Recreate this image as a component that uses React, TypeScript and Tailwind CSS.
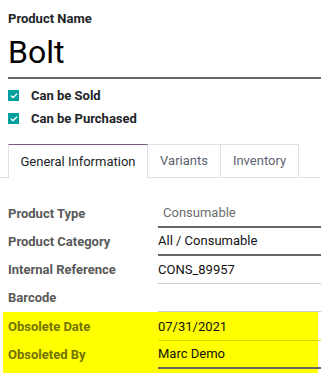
import { Check } from 'lucide-react';

function Checkbox({ label }: { label: string }) {
  return (
    <div className="flex h-[23px] items-center">
      <span className="ml-2 flex h-[11px] w-[11px] items-center justify-center bg-[#00a09d]">
        <Check className="h-[8px] w-[8px] text-white" strokeWidth={4} />
      </span>
      <span className="ml-[12px] text-[13px] font-bold text-[#212529]">{label}</span>
    </div>
  );
}

function Field({
  label,
  value,
  line,
  muted,
  hl,
}: {
  label: string;
  value?: string;
  line: 'dark' | 'light';
  muted?: boolean;
  hl?: boolean;
}) {
  return (
    <div className="flex h-[28px]">
      <div
        className={`flex items-center text-[13px] font-bold ${hl ? 'w-[155px] pl-[5px] text-[#737300]' : 'w-[158px] pl-2 text-[#595959]'}`}
      >
        {label}
      </div>
      <div
        className={`flex flex-1 items-center ${hl ? '-mr-[3px]' : ''} ${
          line === 'dark' ? 'border-b-2 border-[#666]' : hl ? 'border-b border-[#d9d900]' : 'border-b border-[#ccc]'
        }`}
      >
        <span className={`text-[13px] ${muted ? 'pl-[5px] text-[#6c6c6c]' : 'text-[#111]'}`}>{value}</span>
      </div>
    </div>
  );
}

export default function App() {
  return (
    <div className="h-[388px] w-[321px] overflow-hidden bg-white font-['Roboto',sans-serif]">
      <div className="pl-2 pt-[11px] text-[13px] font-bold leading-4 text-[#212529]">Product Name</div>
      <div className="ml-2 border-b-2 border-[#666] pt-[4px] pb-[4px] text-[32px] leading-[42px] text-black">
        Bolt
      </div>
      <div className="pt-[5px]">
        <Checkbox label="Can be Sold" />
        <Checkbox label="Can be Purchased" />
      </div>

      <div className="mt-[14px] flex border-b border-[#dee2e6] pl-2">
        <div className="-mb-px flex h-[34px] w-[140px] items-center justify-center border-x border-t border-[#dee2e6] border-t-[#7c5a7b] bg-white text-[13px] text-[#212529]">
          General Information
        </div>
        <div className="flex h-[33px] w-[73px] items-center justify-center border-r border-t border-[#dee2e6] text-[13px] text-[#5c6370]">
          Variants
        </div>
        <div className="flex h-[33px] w-[78px] items-center justify-center border-r border-t border-[#dee2e6] text-[13px] text-[#5c6370]">
          Inventory
        </div>
      </div>

      <div className="pt-[22px]">
        <Field label="Product Type" value="Consumable" line="dark" muted />
        <Field label="Product Category" value="All / Consumable" line="dark" />
        <Field label="Internal Reference" value="CONS_89957" line="light" />
        <Field label="Barcode" line="light" />
        <div className="mx-[3px] bg-[#ffff00] pt-[1px] pb-[4px]">
          <Field label="Obsolete Date" value="07/31/2021" line="light" hl />
          <Field label="Obsoleted By" value="Marc Demo" line="dark" hl />
        </div>
      </div>
    </div>
  );
}
